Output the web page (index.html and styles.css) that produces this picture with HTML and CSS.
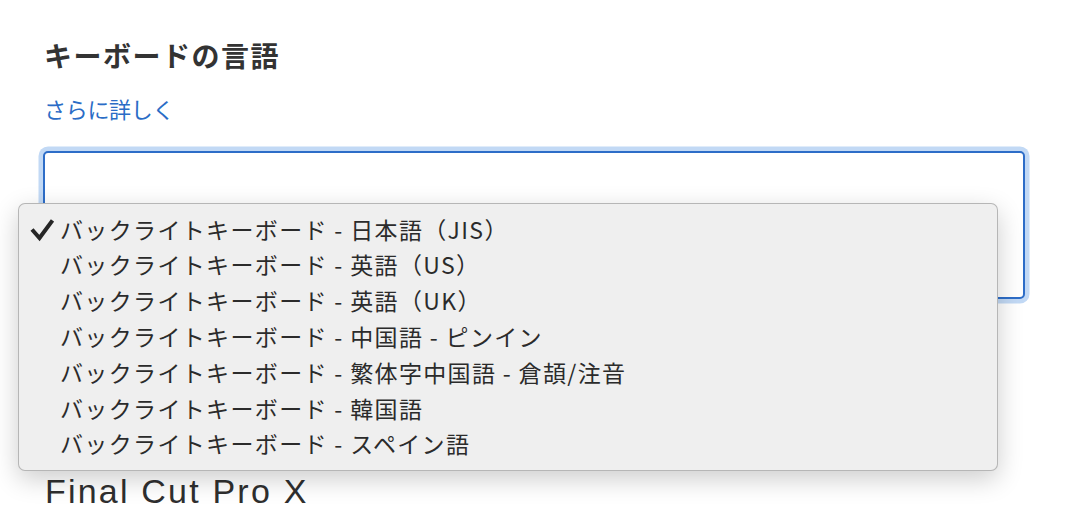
FILE: index.html
```html
<!DOCTYPE html>
<html lang="ja">
<head>
<meta charset="utf-8">
<title>キーボードの言語</title>
<link rel="stylesheet" href="styles.css">
</head>
<body>
<main class="page">
  <h2 class="title">キーボードの言語</h2>
  <a class="more" href="#">さらに詳しく</a>
  <div class="select"></div>
  <h3 class="product">Final Cut Pro X</h3>

  <ul class="menu">
    <li class="item checked">
      <span class="check"><svg width="24" height="24" viewBox="0 0 24 24"><polyline points="2,11.5 9.5,20 22.5,2.5" fill="none" stroke="#262626" stroke-width="4" stroke-linejoin="miter" stroke-linecap="butt"/></svg></span>
      <span class="label">バックライトキーボード - 日本語（JIS）</span>
    </li>
    <li class="item"><span class="check"></span><span class="label">バックライトキーボード - 英語（US）</span></li>
    <li class="item"><span class="check"></span><span class="label">バックライトキーボード - 英語（UK）</span></li>
    <li class="item"><span class="check"></span><span class="label">バックライトキーボード - 中国語 - ピンイン</span></li>
    <li class="item"><span class="check"></span><span class="label">バックライトキーボード - 繁体字中国語 - 倉頡/注音</span></li>
    <li class="item"><span class="check"></span><span class="label">バックライトキーボード - 韓国語</span></li>
    <li class="item"><span class="check"></span><span class="label">バックライトキーボード - スペイン語</span></li>
  </ul>
</main>
</body>
</html>
```

FILE: styles.css
```css
html, body {
  margin: 0;
  padding: 0;
  background: #ffffff;
}

body {
  font-family: "Noto Sans CJK JP", "Noto Sans", sans-serif;
  color: #333333;
  overflow: hidden;
}

.page {
  position: relative;
  width: 1082px;
  height: 520px;
  padding-left: 44px;
  box-sizing: border-box;
  display: flex;
  flex-direction: column;
  align-items: flex-start;
}

.title {
  margin: 0;
  padding-top: 37px;
  font-size: 28px;
  line-height: 36px;
  font-weight: 700;
  letter-spacing: 1.5px;
  color: #333333;
}

.more {
  margin-top: 20px;
  font-size: 22px;
  line-height: 30px;
  letter-spacing: -0.3px;
  color: #2a6cc6;
  text-decoration: none;
}

.select {
  margin-top: 28px;
  margin-left: -1px;
  width: 982px;
  height: 148px;
  box-sizing: border-box;
  border: 2px solid #2d6dc8;
  border-radius: 5px;
  background: #ffffff;
  box-shadow: 0 0 0 4.5px #c2d9f5;
}

.product {
  margin: 172px 0 0 1px;
  font-family: "Liberation Sans", "Noto Sans", sans-serif;
  font-size: 34px;
  line-height: 40px;
  font-weight: 400;
  letter-spacing: 2.2px;
  color: #2f2f2f;
}

.menu {
  position: absolute;
  left: 18px;
  top: 203px;
  width: 980px;
  height: 268px;
  box-sizing: border-box;
  margin: 0;
  padding: 7.7px 0 7.7px 11px;
  list-style: none;
  background: #efefef;
  border: 1px solid rgba(0, 0, 0, 0.24);
  border-radius: 7px;
  box-shadow: 0 8px 26px rgba(0, 0, 0, 0.2);
}

.item {
  display: flex;
  align-items: center;
  height: 35.8px;
  font-size: 23px;
  letter-spacing: 1.35px;
  color: #2b2b2b;
  white-space: nowrap;
}

.check {
  width: 30px;
  height: 24px;
  flex: none;
  display: flex;
  align-items: center;
}

.check svg {
  display: block;
}

.label {
  line-height: 35.8px;
}
```
